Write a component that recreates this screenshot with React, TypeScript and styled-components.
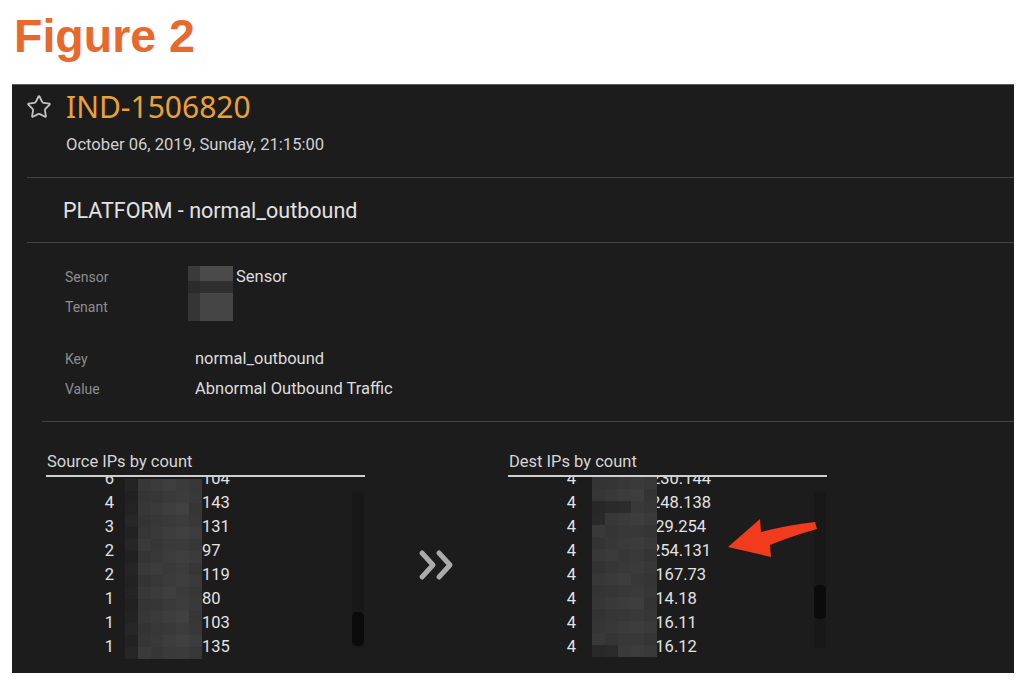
import React from 'react'
import styled, { createGlobalStyle } from 'styled-components'
import { Star } from 'lucide-react'

const GlobalStyle = createGlobalStyle`
  html, body {
    margin: 0;
    background: #fff;
  }
  body {
    font-family: Roboto, "Liberation Sans", sans-serif;
  }
`

const Page = styled.div`
  width: 1024px;
  height: 682px;
  overflow: hidden;
  display: flex;
  flex-direction: column;
`

const FigureTitle = styled.h1`
  margin: 13px 0 0 14px;
  font: bold 46.5px/1 "Liberation Sans", Arial, sans-serif;
  color: #e8692b;
`

const Panel = styled.section`
  position: relative;
  margin: 24px 10px 0 12px;
  height: 588px;
  background: #1c1c1c;
  border-top: 1px solid #5a5a5a;
  display: flex;
  flex-direction: column;
`

const Header = styled.div`
  padding: 4px 0 22px 14px;
`

const TitleRow = styled.div`
  display: flex;
  align-items: center;
  gap: 14px;
`

const IncidentId = styled.span`
  font: 400 30px/36px "Noto Sans", sans-serif;
  color: #eba136;
`

const Timestamp = styled.div`
  margin: 10px 0 0 40px;
  font-size: 16.6px;
  line-height: 20px;
  color: #d0d0d0;
`

const Divider = styled.div<{ $inset: number }>`
  height: 1px;
  margin-left: ${p => p.$inset}px;
  background: #434343;
`

const Subtitle = styled.div`
  height: 64px;
  display: flex;
  align-items: center;
  padding: 2px 0 0 51px;
  box-sizing: border-box;
  font-size: 21.5px;
  color: #e2e2e2;
`

const Details = styled.div`
  display: grid;
  grid-template-columns: 123px 45px 1fr;
  grid-template-rows: 30px 30px 22px 30px 30px;
  padding: 19px 0 17px 53px;
  align-items: center;
`

const Label = styled.span<{ $row: number }>`
  grid-column: 1;
  grid-row: ${p => p.$row};
  font-size: 14px;
  color: #8e8e8e;
`

const Value = styled.span<{ $row: number }>`
  grid-column: 2 / 4;
  grid-row: ${p => p.$row};
  padding-left: 7px;
  font-size: 16.5px;
  color: #dcdcdc;
`

const SensorText = styled.span`
  grid-column: 3;
  grid-row: 1;
  padding-left: 3px;
  font-size: 16.5px;
  color: #dcdcdc;
`

const SensorRedaction = styled.div`
  grid-column: 2;
  grid-row: 1 / span 2;
  align-self: stretch;
  margin: 4px 0 1px;
  display: grid;
  grid-template-columns: 12px 1fr;
  grid-template-rows: 15px 12px 1fr;
`

const Tile = styled.span<{ $shade: string }>`
  background: ${p => p.$shade};
`

const ListsRow = styled.div`
  display: flex;
  padding: 30px 0 0 34px;
`

const ListColumn = styled.div`
  width: 319px;
  display: flex;
  flex-direction: column;
`

const ListTitle = styled.div`
  font-size: 16.5px;
  line-height: 20px;
  padding: 0 0 3px 1px;
  color: #d6d6d6;
  border-bottom: 2px solid #cfcfcf;
`

const Viewport = styled.div`
  position: relative;
  height: 183px;
  overflow: hidden;
`

const Rows = styled.div`
  margin-top: -10px;
`

const Row = styled.div`
  display: flex;
  height: 24px;
  line-height: 24px;
  font-size: 16.5px;
  color: #e2e2e2;
`

const Count = styled.span`
  width: 68px;
  text-align: right;
`

const Address = styled.span<{ $offset: number }>`
  margin-left: ${p => p.$offset}px;
`

const Redaction = styled.div<{ $left: number; $top: number; $width: number; $height: number; $cols: number }>`
  position: absolute;
  left: ${p => p.$left}px;
  top: ${p => p.$top}px;
  width: ${p => p.$width}px;
  height: ${p => p.$height}px;
  display: grid;
  grid-template-columns: repeat(${p => p.$cols}, 1fr);
  grid-template-rows: repeat(15, 1fr);
`

const Track = styled.div<{ $thumbTop: number }>`
  position: absolute;
  right: 1px;
  top: 15px;
  bottom: 12px;
  width: 12px;
  background: #181818;

  &::after {
    content: '';
    position: absolute;
    left: 0;
    right: 0;
    top: ${p => p.$thumbTop}px;
    height: 34px;
    border-radius: 5px;
    background: #0b0b0b;
  }
`

const Between = styled.div`
  width: 143px;
  display: flex;
  justify-content: center;
  padding-top: 97px;
`

const Callout = styled.svg`
  position: absolute;
  left: 708px;
  top: 428px;
`

type Entry = { count: number; ip: string }

const sources: Entry[] = [
  { count: 6, ip: '104' },
  { count: 4, ip: '143' },
  { count: 3, ip: '131' },
  { count: 2, ip: '97' },
  { count: 2, ip: '119' },
  { count: 1, ip: '80' },
  { count: 1, ip: '103' },
  { count: 1, ip: '135' },
]

const dests: Entry[] = [
  { count: 4, ip: '230.144' },
  { count: 4, ip: '248.138' },
  { count: 4, ip: '.29.254' },
  { count: 4, ip: '254.131' },
  { count: 4, ip: '.167.73' },
  { count: 4, ip: '.14.18' },
  { count: 4, ip: '.16.11' },
  { count: 4, ip: '.16.12' },
]

function grey(v: number) {
  return `rgb(${v},${v},${v})`
}

// pseudo-random pixelation, stable between renders
function mosaic(cols: number[], seed: number, dark: number[] = []) {
  const out: string[] = []
  for (let r = 0; r < 15; r++) {
    cols.forEach((base, c) => {
      const n = ((r * 7 + c * 13 + seed) * 2654435761) % 9
      const dim = dark.includes(r * cols.length + c) ? 12 : 0
      out.push(grey(base + (n % 7) - 3 - dim))
    })
  }
  return out
}

const sourceTiles = mosaic([36, 55, 57, 60, 62, 57], 3)
const destTiles = mosaic([54, 56, 58, 59, 55], 5, [10, 11, 12, 15, 70, 71])
const sensorTiles = ['#3a3a3a', '#4a4a4a', '#2b2b2b', '#2f2f2f', '#353535', '#454545']

function IpList(props: { title: string; entries: Entry[]; offset: number; tiles: string[]; redact: [number, number, number, number, number]; thumb: number }) {
  const [left, top, width, height, cols] = props.redact
  return (
    <ListColumn>
      <ListTitle>{props.title}</ListTitle>
      <Viewport>
        <Rows>
          {props.entries.map((e, i) => (
            <Row key={i}>
              <Count>{e.count}</Count>
              <Address $offset={props.offset}>{e.ip}</Address>
            </Row>
          ))}
        </Rows>
        <Redaction $left={left} $top={top} $width={width} $height={height} $cols={cols}>
          {props.tiles.map((s, i) => <Tile key={i} $shade={s} />)}
        </Redaction>
        <Track $thumbTop={props.thumb} />
      </Viewport>
    </ListColumn>
  )
}

function App(): JSX.Element {
  return (
    <Page>
      <GlobalStyle />
      <FigureTitle>Figure 2</FigureTitle>
      <Panel>
        <Header>
          <TitleRow>
            <Star size={26} color="#c2c2c2" strokeWidth={1.7} />
            <IncidentId>IND-1506820</IncidentId>
          </TitleRow>
          <Timestamp>October 06, 2019, Sunday, 21:15:00</Timestamp>
        </Header>
        <Divider $inset={15} />
        <Subtitle>PLATFORM - normal_outbound</Subtitle>
        <Divider $inset={15} />
        <Details>
          <Label $row={1}>Sensor</Label>
          <SensorRedaction>
            {sensorTiles.map((s, i) => <Tile key={i} $shade={s} />)}
          </SensorRedaction>
          <SensorText>Sensor</SensorText>
          <Label $row={2}>Tenant</Label>
          <Label $row={4}>Key</Label>
          <Value $row={4}>normal_outbound</Value>
          <Label $row={5}>Value</Label>
          <Value $row={5}>Abnormal Outbound Traffic</Value>
        </Details>
        <Divider $inset={30} />
        <ListsRow>
          <IpList
            title="Source IPs by count"
            entries={sources}
            offset={88}
            tiles={sourceTiles}
            redact={[79, 2, 77, 181, 6]}
            thumb={120}
          />
          <Between>
            <svg width="38" height="32" viewBox="0 0 38 32" fill="none" stroke="#ababab" strokeWidth="5" strokeLinecap="round" strokeLinejoin="round">
              <polyline points="4,4 15,16 4,28" />
              <polyline points="21,4 32,16 21,28" />
            </svg>
          </Between>
          <IpList
            title="Dest IPs by count"
            entries={dests}
            offset={75}
            tiles={destTiles}
            redact={[84, 0, 65, 180, 5]}
            thumb={93}
          />
        </ListsRow>
        <Callout width="104" height="50" viewBox="0 0 104 50">
          <path
            d="M8 34 L40 6 L41 19 Q68 12 95 9 L97 16 Q72 23 50 32 L51 44 Z"
            fill="#f03c1c"
          />
        </Callout>
      </Panel>
    </Page>
  )
}

export default App
